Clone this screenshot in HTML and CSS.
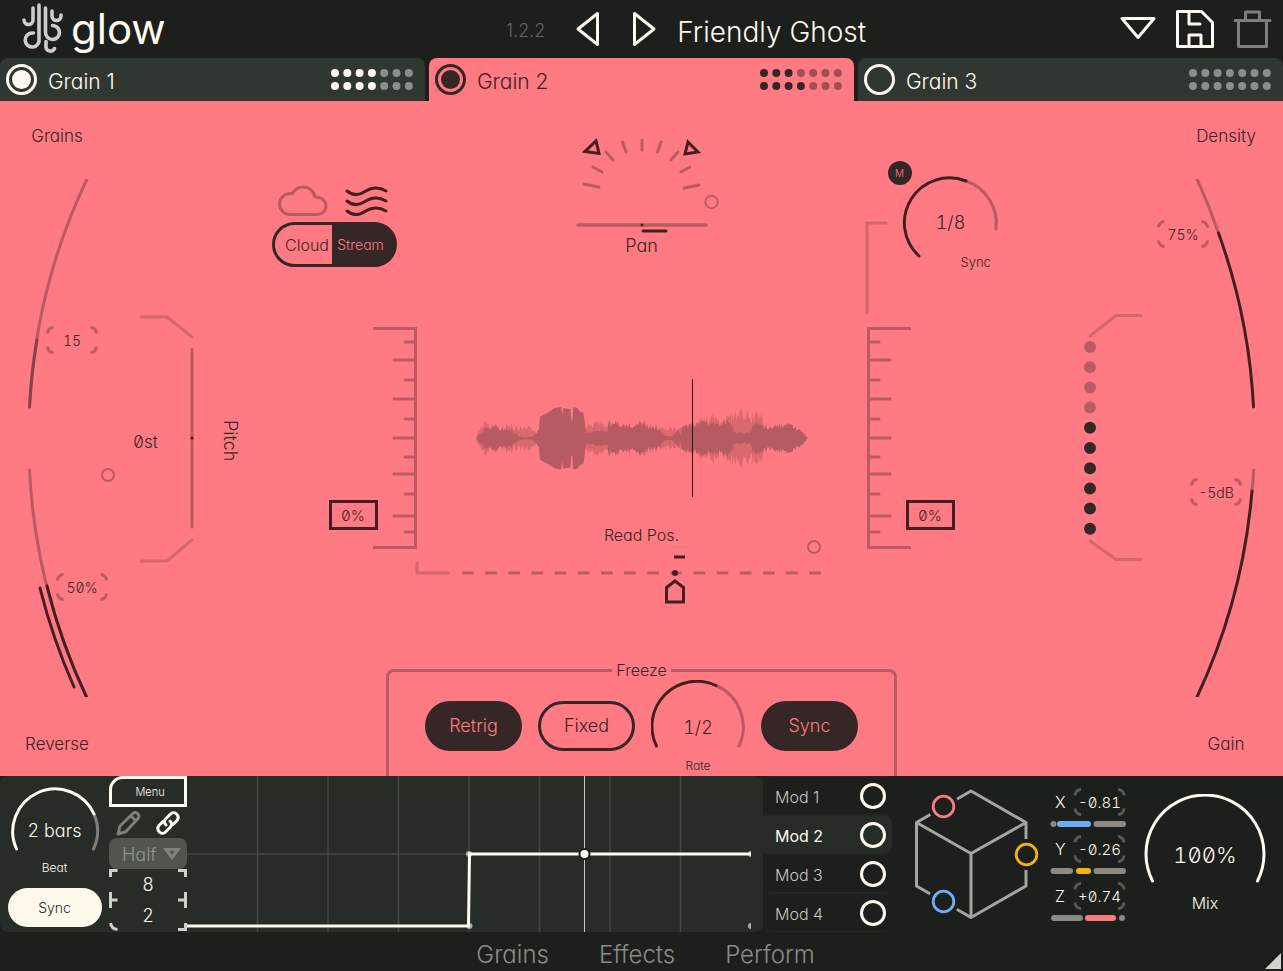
FILE: index.html
```html
<!DOCTYPE html>
<html lang="en">

<head>
    <meta charset="utf-8">
    <meta name="viewport" content="width=device-width, initial-scale=1">
    <title>Glow</title>
    <link rel="stylesheet" href="styles.css">
</head>

<body>
    <!-- shared shapes -->
    <svg class="defs" aria-hidden="true">
        <symbol id="corners" viewBox="0 0 52 28">
            <path d="M1.500 7.500a6 6 0 0 1 6-6M44.500 1.500a6 6 0 0 1 6 6M50.500 20.500a6 6 0 0 1-6 6M7.500 26.500a6 6 0 0 1-6-6" />
        </symbol>
        <symbol id="ticks" viewBox="0 0 44 222">
            <path d="M42.500 0v222M32 15h8M21 33h19M32 53h8M21 72h19M32 92h8M21 111h19M32 130h8M21 147h19M32 167h8M21 189h19M32 205h8M0 1.500h43M0 220.500h43" />
        </symbol>
    </svg>

    <header class="topbar">
        <div class="brand">
            <svg width="42" height="52" viewBox="0 0 42 52">
                <g fill="none" stroke="#d0cdc8" stroke-width="3.600" stroke-linecap="round">
                    <path d="M17 2v33.500a7 7 0 1 1-7-5.500h1.500" />
                    <path d="M11 5v12a4.500 4.500 0 0 1-9 0" />
                    <path d="M23.500 5v24a7 7 0 1 0 7-6.500" />
                    <path d="M30 8v5a4.500 4.500 0 0 0 9 0v-1" />
                    <path d="M24 38.500v6a4.500 4.500 0 0 0 8.500 1" />
                </g>
            </svg>
            <span class="wordmark">glow</span>
        </div>
        <div class="preset">
            <span class="version">1.2.2</span>
            <button class="icon" aria-label="Previous preset">
                <svg width="26" height="38" viewBox="0 0 26 38"><path d="M3 19 22.500 3.500v31z" /></svg>
            </button>
            <button class="icon" aria-label="Next preset">
                <svg width="26" height="38" viewBox="0 0 26 38"><path d="M3.500 3.500v31L23 19z" /></svg>
            </button>
            <span class="presetName">Friendly Ghost</span>
        </div>
        <div class="actions">
            <button class="icon" aria-label="Preset list">
                <svg width="38" height="26" viewBox="0 0 38 26"><path d="M3 2.500h32L19 21.500z" /></svg>
            </button>
            <button class="icon" aria-label="Save">
                <svg width="40" height="40" viewBox="0 0 40 40"><path d="M2.500 2.500h24l11 11v24h-35zM14 3v12h11M14 37V26h12v11" /></svg>
            </button>
            <button class="icon dim" aria-label="Delete">
                <svg width="40" height="40" viewBox="0 0 40 40"><path d="M2 11.500h35M5.500 12v25.500h28V12M12.500 11V3h14v8" /></svg>
            </button>
        </div>
    </header>

    <nav class="tabs">
        <div class="tab">
            <input type="checkbox" class="power" aria-label="Grain 1 on" checked>
            <button>Grain 1</button>
            <svg class="dots" width="82" height="22" viewBox="0 0 82 22">
                <path d="M4 4h38M4 17h38" />
                <path class="off" d="M53.200 4h26M53.200 17h26" />
            </svg>
        </div>
        <div class="tab active">
            <input type="checkbox" class="power" aria-label="Grain 2 on" checked>
            <button>Grain 2</button>
            <svg class="dots" width="82" height="22" viewBox="0 0 82 22">
                <path d="M4 4h26M4 17h38" />
                <path class="off" d="M40.900 4h38M53.200 17h26" />
            </svg>
        </div>
        <div class="tab">
            <input type="checkbox" class="power" aria-label="Grain 3 on">
            <button>Grain 3</button>
            <svg class="dots" width="82" height="22" viewBox="0 0 82 22">
                <path class="off" d="M4 4h75M4 17h75" />
            </svg>
        </div>
    </nav>

    <main class="stage">
        <section class="side">
            <div class="rail">
                <label for="grains">Grains</label>
                <div class="arcs">
                    <svg width="130" height="518" viewBox="0 0 130 518">
                        <path class="soft" d="M87 0A602 602 0 0 0 29.500 228" />
                        <path class="mid" d="M37 161A602 602 0 0 0 29.500 228" />
                        <path class="soft" d="M29.500 291A602 602 0 0 0 86.500 518" />
                        <path class="dark" d="M47 407A602 602 0 0 0 86.500 518M40 409A612 612 0 0 0 74 508" />
                    </svg>
                    <div class="value grainsValue"><svg><use href="#corners" /></svg><input id="grains" type="text" value="15"></div>
                    <div class="value reverseValue"><svg><use href="#corners" /></svg><input id="reverse" type="text" value="50%"></div>
                </div>
                <label for="reverse">Reverse</label>
            </div>
            <div class="pitch">
                <span class="modDot"></span>
                <div class="pitchSlider">
                    <svg width="56" height="248" viewBox="0 0 56 248">
                        <path class="faint" d="M2 2h26l25 20M53 225 28 246H2" />
                        <path class="soft" d="M53 34v178" />
                        <circle class="fill" cx="53" cy="123" r="1.500" />
                    </svg>
                    <span class="pitchValue">0st</span>
                </div>
                <span class="pitchLabel">Pitch</span>
            </div>
        </section>

        <section class="center">
            <div class="upper">
                <div class="mode">
                    <div class="modeIcons">
                        <svg width="50" height="31" viewBox="0 0 50 31"><path class="soft" d="M12 29.500a10.500 10.500 0 0 1 0-21h2.500C17 4.500 20.500 2 25 2c6 0 10.500 3.500 12 10 6-.500 11 3.500 11 9a8.500 8.500 0 0 1-8.500 8.500z" /></svg>
                        <svg width="44" height="31" viewBox="0 0 44 31"><path class="dark" d="M2 6c5 4 11 5 17 1s14-6 22-1M2 16c5 4 11 5 17 1s14-6 22-1M2 26c5 4 11 5 17 1s14-6 22-1" /></svg>
                    </div>
                    <div class="toggle">
                        <button>Cloud</button>
                        <button class="on">Stream</button>
                    </div>
                </div>

                <div class="pan">
                    <svg width="156" height="100" viewBox="0 0 156 100">
                        <path class="soft" d="M20 48l15 3M29 31l9 5M42 16l7 8M58.500 6l3.500 10M78 4v10M97 6l-3.500 10M114 16l-7 8M126 31l-9 5M135 49l-15 3" />
                        <path class="soft" stroke-width="3.500" d="M14 89h128" />
                        <path class="dark sharp" d="M32 5l3 12.500L21 15.500zM124 6l10 10-13 2z" />
                        <path class="dark" d="M79 95h23" />
                        <circle class="fill" cx="78" cy="89" r="1.500" />
                        <circle class="soft" cx="147.500" cy="66" r="6.200" stroke-width="2" />
                    </svg>
                    <span>Pan</span>
                </div>

                <div class="syncKnob">
                    <svg width="136" height="153" viewBox="0 0 136 153">
                        <path class="faint" d="M2 152V62h19" />
                        <path class="soft" d="M101 20a45 45 0 0 1 30 48" />
                        <path class="dark" d="M54 95A45 45 0 0 1 101 20" />
                    </svg>
                    <button class="mBadge">M</button>
                    <span class="syncValue">1/8</span>
                    <span class="syncLabel">Sync</span>
                </div>
            </div>

            <div class="meters">
                <div class="meter">
                    <input type="text" class="percent" aria-label="Start" value="0%">
                    <svg class="ticks" width="44" height="222"><use href="#ticks" /></svg>
                </div>
                <div class="wave">
                    <svg id="wave" width="332" height="118" viewBox="0 0 332 118">
                        <path id="waveBack" fill="#d9696f" />
                        <path id="waveFront" fill="#b65b61" />
                        <path d="M216.500 0v118" stroke="#2b1715" stroke-width="1" />
                    </svg>
                    <div class="readPos">
                        <span class="readLabel">Read Pos.</span>
                        <span class="modDot"></span>
                    </div>
                </div>
                <div class="meter right">
                    <input type="text" class="percent" aria-label="End" value="0%">
                    <svg class="ticks flip" width="44" height="222"><use href="#ticks" /></svg>
                </div>
            </div>

            <svg class="readTrack" width="410" height="57" viewBox="0 0 410 57">
                <path class="faint" d="M2 14v10h31" />
                <path class="soft flat" d="M47 24h360" stroke-dasharray="11.700 11.450" />
                <path class="dark flat" d="M259 8h11" />
                <circle class="fill" cx="260" cy="24" r="3" />
                <path class="dark sharp" d="M260 32l8.500 6.500V53h-17V38.500z" />
            </svg>

            <fieldset class="freeze">
                <legend>Freeze</legend>
                <div class="freezeRow">
                    <button class="pill on">Retrig</button>
                    <button class="pill">Fixed</button>
                    <div class="knob">
                        <svg width="94" height="96" viewBox="0 0 94 96">
                            <path class="soft" d="M65 5.500A45 45 0 0 1 88 66" />
                            <path class="dark" d="M5.500 66A45 45 0 0 1 65 5.500" />
                        </svg>
                        <span class="knobValue">1/2</span>
                        <span class="small">Rate</span>
                    </div>
                    <button class="pill on">Sync</button>
                </div>
            </fieldset>
        </section>

        <section class="side mirrored">
            <div class="rail">
                <label for="density">Density</label>
                <div class="arcs">
                    <svg width="130" height="518" viewBox="0 0 130 518">
                        <path class="soft" d="M44 0A602 602 0 0 1 65.500 54" />
                        <path class="dark" d="M65.500 54A602 602 0 0 1 100.500 228" />
                        <path class="soft" d="M100.500 291Q100.500 301 99 312" />
                        <path class="dark" d="M99 312A602 602 0 0 1 44 518" />
                    </svg>
                    <div class="value densityValue"><svg><use href="#corners" /></svg><input id="density" type="text" value="75%"></div>
                    <div class="value gainValue"><svg><use href="#corners" /></svg><input id="gain" type="text" value="-5dB"></div>
                </div>
                <label for="gain">Gain</label>
            </div>
            <svg class="level" width="60" height="248" viewBox="0 0 60 248">
                <path class="faint" d="M7 22 33 1.500h25M7 227l26 18.500h25" />
                <path class="levelDots off" d="M7 33v61" />
                <path class="levelDots" d="M7 113.800v102" />
            </svg>
        </section>
    </main>

    <section class="bottom">
        <div class="lfo">
            <div class="beat">
                <div class="knob">
                    <svg width="90" height="68" viewBox="0 0 90 68">
                        <path class="dim" d="M84 30a42.500 42.500 0 0 1-.500 35" />
                        <path class="light" d="M6.500 65A42.500 42.500 0 0 1 84 30" />
                    </svg>
                    <span class="knobValue">2 bars</span>
                </div>
                <span class="small">Beat</span>
                <button class="beatSync">Sync</button>
            </div>
            <div class="lfoMenu">
                <button class="menuBtn">Menu</button>
                <div class="tools">
                    <button class="icon dim" aria-label="Draw">
                        <svg width="26" height="26" viewBox="0 0 26 26"><path d="M2 24l2-8L17 3.500c3-3 8 2 5 5L10 21.500zM15 6l5 5" /></svg>
                    </button>
                    <button class="icon" aria-label="Link">
                        <svg width="26" height="26" viewBox="0 0 26 26"><path d="M11 15c-2-2-2-4.500 0-6.500l4.500-4.500c4-4 10 2 6.500 6.500L18 14.500M15 11c2 2 2 4.500 0 6.500L10.500 22c-4 4-10-2-6.500-6.500L8 11.500" /></svg>
                    </button>
                </div>
                <div class="selectWrap">
                    <select aria-label="Speed"><option>Half</option></select>
                    <svg width="18" height="14" viewBox="0 0 18 14"><path d="M3 2.500h12L9 10.500z" /></svg>
                </div>
                <div class="grid">
                    <svg width="78" height="62" viewBox="0 0 78 62">
                        <path d="M1.500 8V1.500h7M69 1.500h7.500V8M1.500 23v16M1.500 31h7M76.500 23v16M76.500 31H69M1.500 54q1 6 7 6.500M76.500 54v6.500H69" />
                    </svg>
                    <input type="text" class="columns" aria-label="Columns" value="8">
                    <input type="text" class="rows" aria-label="Rows" value="2">
                </div>
            </div>
            <svg class="graph" viewBox="0 0 564 156">
                <path d="M70.500 0v156M141 0v156M211.500 0v156M282 0v156M352.500 0v156M423 0v156M493.500 0v156M0 78h564" stroke="#434842" stroke-width="1.500" />
                <path d="M397.500 0v156" stroke="#c4c5be" />
                <g fill="#aaaba5">
                    <circle cx="282" cy="78" r="3" />
                    <circle cx="282.500" cy="150" r="3" />
                    <path d="M564 75a3 3 0 0 0 0 6zM564 147a3 3 0 0 0 0 6z" />
                </g>
                <path d="M0 150h281.500L282.500 78H564" fill="none" stroke="#fffaf0" stroke-width="3" />
                <circle cx="397.500" cy="78" r="5" fill="#fffaf0" stroke="#1d1f1c" stroke-width="2" />
            </svg>
        </div>

        <div class="mods">
            <div class="mod"><button>Mod 1</button><input type="checkbox" class="power" aria-label="Mod 1 on"></div>
            <div class="mod active"><button>Mod 2</button><input type="checkbox" class="power" aria-label="Mod 2 on"></div>
            <div class="mod"><button>Mod 3</button><input type="checkbox" class="power" aria-label="Mod 3 on"></div>
            <div class="mod"><button>Mod 4</button><input type="checkbox" class="power" aria-label="Mod 4 on"></div>
        </div>

        <svg class="cube" width="128" height="136" viewBox="0 0 128 136">
            <path d="M59 5 4.500 36.500V100L59 131.500 114 100V36.500zM4.500 36.500 59 67.500l55-31M59 67.500v64" fill="none" stroke="#a5a49f" stroke-width="3" stroke-linejoin="round" />
            <g fill="#1d1f1c">
                <circle cx="31.500" cy="20.500" r="15.500" />
                <circle cx="114.500" cy="68.500" r="15.500" />
                <circle cx="31.500" cy="115.500" r="15.500" />
            </g>
            <g fill="none" stroke-width="2.800">
                <circle cx="31.500" cy="20.500" r="10.300" stroke="#f67b83" />
                <circle cx="114.500" cy="68.500" r="10.300" stroke="#f0b310" />
                <circle cx="31.500" cy="115.500" r="10.300" stroke="#6fadf5" />
            </g>
        </svg>

        <div class="axes">
            <div class="axis">
                <label for="axisX">X</label>
                <div class="value"><svg><use href="#corners" /></svg><input id="axisX" type="text" value="-0.81"></div>
                <svg class="bar" width="76" height="8" viewBox="0 0 76 8"><path d="M3.500 4v0M46.500 4H73" /><path class="blue" d="M10 4h28" /></svg>
            </div>
            <div class="axis">
                <label for="axisY">Y</label>
                <div class="value"><svg><use href="#corners" /></svg><input id="axisY" type="text" value="-0.26"></div>
                <svg class="bar" width="76" height="8" viewBox="0 0 76 8"><path d="M3.500 4H20M46.500 4H73" /><path class="yellow" d="M29 4h9" /></svg>
            </div>
            <div class="axis">
                <label for="axisZ">Z</label>
                <div class="value"><svg><use href="#corners" /></svg><input id="axisZ" type="text" value="+0.74"></div>
                <svg class="bar" width="76" height="8" viewBox="0 0 76 8"><path d="M4 4h26M72 4v0" /><path class="pink" d="M38 4h25" /></svg>
            </div>
        </div>

        <div class="mix">
            <div class="knob">
                <svg width="122" height="92" viewBox="0 0 122 92">
                    <path class="light" d="M8.500 87A59 59 0 1 1 113.500 87" />
                </svg>
                <span class="knobValue">100%</span>
            </div>
            <span>Mix</span>
        </div>
    </section>

    <footer class="pages">
        <a href="#grains">Grains</a>
        <a href="#effects">Effects</a>
        <a href="#perform">Perform</a>
        <svg class="resize" width="16" height="16" viewBox="0 0 16 16"><path d="M16 0v16H0z" fill="#d6d2ca" /></svg>
    </footer>

    <script>
        // x, half height
        var front = [[0, 0], [3, 5], [8, 10], [13, 12], [20, 13], [28, 11], [35, 10], [39, 5], [43, 2], [48, 1], [54, 1], [58, 5], [62, 9], [62.5, 21], [70, 25], [78, 30], [84, 31], [85, 23], [86, 30], [93, 29], [94, 17], [95, 17], [96, 31], [100, 30], [102, 27], [106, 25], [108, 12], [109, 7], [120, 8], [130, 9], [131, 18], [140, 18], [150, 14], [160, 17], [170, 12], [181, 11], [184, 4], [190, 2], [194, 2], [199, 11], [202, 4], [203, 18], [206, 12], [214, 17], [218, 19], [228, 19], [233, 17], [240, 17], [247, 20], [253, 13], [255, 6], [270, 6], [273, 16], [280, 18], [285, 14], [295, 14], [305, 16], [312, 15], [318, 10], [323, 6], [327, 0]];
        var back = [[0, 0], [3, 10], [6, 19], [15, 15], [25, 15], [33, 18], [38, 12], [47, 13], [56, 12], [60, 8], [107, 8], [108, 18], [127, 18], [132, 15], [165, 18], [180, 13], [195, 11], [210, 16], [235, 27], [240, 20], [252, 27], [262, 31], [270, 27], [278, 30], [282, 31], [283, 16], [300, 16], [315, 13], [327, 0]];
        var scale = 1.014;

        function heightAt(points, x) {
            for (var i = 1; i < points.length; i++) {
                if (x <= points[i][0]) {
                    var a = points[i - 1], b = points[i];
                    return a[1] + (b[1] - a[1]) * (x - a[0]) / (b[0] - a[0]);
                }
            }
            return 0;
        }

        function drawWave(id, points, rough) {
            var seed = 7, top = '', bottom = '';
            for (var x = 0; x <= 327; x++) {
                seed = (seed * 73 + 41) % 1009;
                var h = heightAt(points, x);
                // the loud part is smooth
                if (x < 62 || x > 107) {
                    h = h * (1 - rough * seed / 1009);
                }
                top += ' ' + (x * scale).toFixed(1) + ',' + (59 - h).toFixed(1);
                bottom = ' ' + (x * scale).toFixed(1) + ',' + (59.5 + h).toFixed(1) + bottom;
            }
            document.getElementById(id).setAttribute('d', 'M' + top + bottom + 'z');
        }

        drawWave('waveBack', back, 0.5);
        drawWave('waveFront', front, 0.4);
    </script>
</body>

</html>
```
FILE: styles.css
```css
* {
    box-sizing: border-box;
}

body {
    margin: 0;
    min-height: 100vh;
    display: flex;
    flex-direction: column;
    background: #1d1f1c;
    color: #fffaf0;
    font-family: Inter, Lato, sans-serif;
    font-size: 16px;
    font-weight: 300;
    line-height: 20px;
    font-feature-settings: "cv11", "ss03";
}

svg {
    display: block;
    flex-shrink: 0;
}

.defs {
    position: absolute;
    width: 0;
    height: 0;
}

button, input, select {
    font: inherit;
    font-feature-settings: inherit;
    color: inherit;
    background: none;
    border: none;
    padding: 0;
    margin: 0;
}

input[type="text"] {
    text-align: center;
}

/* readouts: even digits, slashed zero */
input[type="text"], .knobValue, .syncValue, .pitchValue {
    font-feature-settings: "cv11", "tnum", "zero";
}

.icon svg {
    fill: none;
    stroke: #fffaf0;
    stroke-width: 3;
    stroke-linejoin: round;
    stroke-linecap: round;
}

.icon.dim svg {
    stroke: #7e7f79;
}

/* top bar */
.topbar {
    display: flex;
    align-items: center;
    height: 58px;
    padding: 0 10px 0 22px;
}

.brand {
    display: flex;
    align-items: center;
    gap: 7px;
    width: 484px;
}

.wordmark {
    font-size: 42px;
    line-height: 40px;
    font-weight: 400;
}

.preset {
    display: flex;
    align-items: center;
    gap: 30px;
    flex: 1;
}

.version {
    font-size: 18px;
    color: #62645f;
    padding-top: 4px;
}

.presetName {
    font-size: 28px;
    line-height: 32px;
    margin-left: -10px;
    padding-top: 6px;
}

.actions {
    display: flex;
    align-items: center;
    gap: 18px;
}

/* grain tabs */
.tabs {
    display: grid;
    grid-template-columns: 1fr 1fr 1fr;
    gap: 4px;
}

.tab {
    display: flex;
    align-items: center;
    gap: 11px;
    height: 43px;
    padding: 0 12px 0 6px;
    background: #303730;
    border-radius: 8px 8px 0 0;
    font-size: 21px;
}

.tab button {
    flex: 1;
    text-align: left;
    padding-top: 4px;
}

.tab.active {
    background: #ff7a82;
    color: #352725;
}

.power {
    appearance: none;
    width: 31px;
    height: 31px;
    border: 3px solid currentColor;
    border-radius: 50%;
    padding: 3px;
}

.power:checked {
    background: currentColor content-box;
}

.dots {
    fill: none;
    stroke: currentColor;
    stroke-width: 8;
    stroke-linecap: round;
    stroke-dasharray: 0 12.3;
}

.dots .off {
    stroke: #8c8e89;
}

.active .dots .off {
    stroke: #a04f53;
}

/* stage */
.stage {
    flex: 1;
    display: grid;
    grid-template-columns: 1fr 740px 1fr;
    background: #ff7a82;
    color: #352725;
}

.stage svg, .knob svg {
    fill: none;
    stroke-width: 3;
    stroke-linecap: round;
    stroke-linejoin: round;
}

.soft {
    stroke: #b95c62;
}

.faint {
    stroke: #d2686e;
}

.mid {
    stroke: #8a4245;
}

.dark {
    stroke: #43201f;
}

.dim {
    stroke: #7e7f79;
}

.light {
    stroke: #fffaf0;
}

.fill {
    fill: #43201f;
}

.sharp {
    stroke-linejoin: miter;
}

.flat {
    stroke-linecap: butt;
}

.side {
    display: grid;
}

.side > * {
    grid-area: 1 / 1;
}

.rail {
    display: flex;
    flex-direction: column;
    justify-content: space-between;
    width: 130px;
    padding: 25px 0 22px;
}

.rail label {
    width: 114px;
    text-align: center;
    font-size: 17px;
}

.mirrored .rail {
    justify-self: end;
}

.mirrored .rail label {
    margin-left: auto;
}

.arcs {
    position: relative;
    margin-bottom: 4px;
}

.value {
    position: relative;
    width: 52px;
    height: 28px;
}

.value svg {
    width: 100%;
    height: 100%;
    fill: none;
    stroke: #b95c62;
    stroke-width: 3;
    stroke-linecap: butt;
}

.value input {
    position: absolute;
    left: 0;
    top: 0;
    width: 100%;
    height: 100%;
    font-size: 15px;
}

.arcs .value {
    position: absolute;
}

.arcs .value input {
    font-size: 14px;
}

.grainsValue {
    left: 46px;
    top: 147px;
}

.reverseValue {
    left: 56px;
    top: 394px;
}

.densityValue {
    left: 4px;
    top: 41px;
}

.gainValue {
    left: 37px;
    top: 299px;
}

.pitch {
    display: flex;
    align-items: center;
    margin-left: 101px;
    justify-self: start;
}

.modDot {
    width: 14px;
    height: 14px;
    border: 2px solid #b95c62;
    border-radius: 50%;
}

.pitch .modDot {
    margin-top: 72px;
}

.pitchSlider {
    position: relative;
    margin-left: 24px;
}

.pitchValue {
    position: absolute;
    left: -6px;
    top: 117px;
    font-size: 17px;
}

.pitchLabel {
    writing-mode: vertical-rl;
    margin: 4px 0 0 25px;
    font-size: 18px;
}

.level {
    place-self: center end;
    margin: 0 140px 2px 0;
}

.levelDots {
    stroke: #352725;
    stroke-width: 12;
    stroke-dasharray: 0 20.2;
}

.levelDots.off {
    stroke: #b95c62;
}

.center {
    display: flex;
    flex-direction: column;
    align-items: stretch;
}

.upper {
    display: grid;
    grid-template-columns: 1fr 156px 1fr;
    height: 226px;
}

.mode {
    padding-top: 84px;
    width: 125px;
}

.modeIcons {
    display: flex;
    gap: 17px;
    padding-left: 6px;
}

.toggle {
    display: flex;
    height: 45px;
    margin-top: 6px;
    border: 3px solid #352725;
    border-radius: 23px;
    background: #352725;
    font-size: 16px;
}

.toggle button {
    width: 57px;
    padding-left: 8px;
    border-radius: 20px 0 0 20px;
    background: #ff7a82;
}

.toggle .on {
    width: 62px;
    padding: 0 4px 0 0;
    background: none;
    color: #ff7a82;
    font-size: 14px;
}

.pan {
    display: flex;
    flex-direction: column;
    align-items: center;
    padding-top: 35px;
    font-size: 18px;
}

.syncKnob {
    position: relative;
    justify-self: end;
    margin: 60px 11px 0 0;
}

.mBadge {
    position: absolute;
    left: 23px;
    top: 0;
    width: 24px;
    height: 24px;
    border-radius: 50%;
    background: #352725;
    color: #ff7a82;
    font-size: 10px;
}

.syncValue {
    position: absolute;
    left: 41px;
    top: 52px;
    width: 90px;
    text-align: center;
    font-size: 18px;
}

.syncLabel {
    position: absolute;
    left: 96px;
    top: 91px;
    font-size: 13px;
}

.meters {
    display: flex;
    padding: 0 57px;
}

.meter {
    display: flex;
    align-items: flex-start;
}

.meter.right {
    flex-direction: row-reverse;
}

.percent {
    width: 49px;
    height: 30px;
    margin-top: 173px;
    border: 3px solid #43201f;
    font-size: 15px;
}

.ticks {
    stroke: #b95c62;
    margin-left: -5px;
}

.ticks.flip {
    transform: scaleX(-1);
    margin: 0 -5px 0 0;
}

.wave {
    flex: 1;
    display: flex;
    flex-direction: column;
    align-items: center;
    padding-top: 52px;
}

.readPos {
    width: 100%;
    display: grid;
    grid-template-columns: 1fr auto 1fr;
    align-items: end;
    margin-top: 28px;
}

.readLabel {
    grid-column: 2;
}

.readPos .modDot {
    justify-self: end;
    margin: 0 46px -9px 0;
}

.readTrack {
    margin-left: 143px;
}

.freeze {
    align-self: center;
    width: 511px;
    height: 116px;
    margin: auto 0 0;
    padding: 0;
    border: 3px solid #b95c62;
    border-bottom: none;
    border-radius: 8px 8px 0 0;
}

.freeze legend {
    margin: 0 auto;
    padding: 0 4px;
    font-size: 16px;
}

.freezeRow {
    display: flex;
    justify-content: center;
    gap: 16px;
}

.pill {
    width: 97px;
    height: 50px;
    margin-top: 21px;
    border: 3px solid #352725;
    border-radius: 25px;
    font-size: 18px;
}

.pill.on {
    background: #352725;
    color: #ff7a82;
}

.knob {
    display: grid;
    justify-items: center;
}

.knob > * {
    grid-area: 1 / 1;
}

.knobValue {
    align-self: center;
    font-size: 18px;
}

.freeze .knob .small {
    align-self: end;
}

.small {
    font-size: 12px;
}

/* bottom strip */
.bottom {
    display: flex;
    height: 156px;
}

.lfo {
    flex: 1;
    display: flex;
    padding-right: 12px;
    background: #272d26;
    border-radius: 8px;
}

.beat {
    display: flex;
    flex-direction: column;
    align-items: center;
    width: 109px;
    padding-top: 8px;
}

.beat .knobValue {
    padding-top: 26px;
}

.beat .small {
    margin-top: 6px;
}

.beatSync {
    width: 94px;
    height: 39px;
    margin-top: 10px;
    border-radius: 20px;
    background: #fff8ec;
    color: #272d26;
    font-size: 14px;
}

.lfoMenu {
    width: 78px;
}

.menuBtn {
    display: block;
    width: 100%;
    height: 31px;
    border: 3px solid #fffaf0;
    border-radius: 14px 0 0 0;
    padding-left: 4px;
    font-size: 11px;
}

.tools {
    display: flex;
    justify-content: space-around;
    height: 31px;
    padding-top: 3px;
}

.tools .icon {
    height: 26px;
}

.selectWrap {
    position: relative;
}

.selectWrap select {
    appearance: none;
    display: block;
    width: 100%;
    height: 31px;
    padding: 3px 0 0 13px;
    border-radius: 8px;
    background: #50564e;
    color: #92958e;
    font-size: 18px;
}

.selectWrap svg {
    position: absolute;
    right: 6px;
    top: 9px;
    fill: none;
    stroke: #7e827b;
    stroke-width: 3;
    pointer-events: none;
}

.grid {
    display: grid;
    grid-template-rows: 31px 31px;
}

.grid svg {
    grid-area: 1 / 1 / 3 / 2;
    fill: none;
    stroke: #d0cec7;
    stroke-width: 3;
}

.grid input {
    width: 100%;
    font-size: 18px;
}

.columns {
    grid-area: 1 / 1;
}

.rows {
    grid-area: 2 / 1;
}

.graph {
    flex: 1;
    height: 156px;
    min-width: 0;
}

.mods {
    width: 129px;
}

.mod {
    display: flex;
    align-items: center;
    justify-content: space-between;
    height: 39px;
    padding: 0 6px 0 12px;
    border: 1px solid #232722;
    border-width: 1px 0;
    border-radius: 8px;
    color: #c9c7c0;
}

.mod button {
    padding-top: 2px;
}

.mod.active {
    background: #272d26;
    border-radius: 0 8px 8px 0;
    color: #fffaf0;
    font-weight: 400;
}

.mod .power {
    width: 26px;
    height: 26px;
    color: #fffaf0;
}

.cube {
    margin: 10px 10px 0 20px;
}

.axes {
    display: flex;
    flex-direction: column;
    gap: 7px;
    width: 77px;
    padding-top: 12px;
}

.axis {
    display: grid;
    grid-template-columns: 22px 55px;
    align-items: center;
    row-gap: 4px;
}

.axis label {
    padding-left: 5px;
}

.axis .value {
    width: 55px;
}

.axis .value svg {
    stroke: #565954;
}

.bar {
    grid-column: 1 / 3;
    fill: none;
    stroke: #8c8982;
    stroke-width: 6;
    stroke-linecap: round;
}

.blue {
    stroke: #6fadf5;
}

.yellow {
    stroke: #f0b310;
}

.pink {
    stroke: #f67b83;
}

.mix {
    display: flex;
    flex-direction: column;
    align-items: center;
    gap: 7px;
    padding: 18px 17px 0;
}

.mix .knobValue {
    font-size: 22px;
    padding-top: 30px;
}

/* page links */
.pages {
    position: relative;
    display: flex;
    justify-content: center;
    gap: 50px;
    height: 39px;
    padding: 8px 0 0 8px;
    font-size: 24px;
    line-height: 30px;
}

.pages a {
    color: #8b8b85;
    text-decoration: none;
}

.resize {
    position: absolute;
    right: 2px;
    bottom: 2px;
}
```
